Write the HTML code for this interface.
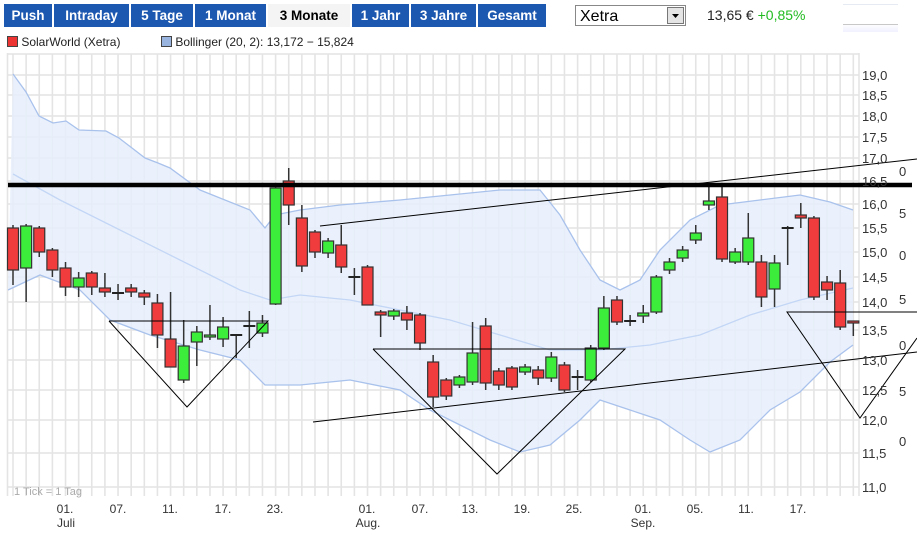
<!DOCTYPE html>
<html><head><meta charset="utf-8">
<style>
body{margin:0;width:917px;height:535px;background:#fff;font-family:"Liberation Sans",Arial,sans-serif;position:relative;overflow:hidden}
.tab{position:absolute;top:4px;height:23px;background:#1c57b0;color:#fff;font-weight:bold;font-size:13.5px;line-height:23px;text-align:center}
.tab.sel{background:#f4f4f4;color:#000}
.sel2{position:absolute;left:575px;top:5px;width:111px;height:21px;border:1px solid #888;background:#fff;font-size:16px;line-height:21px;box-sizing:border-box;padding-left:4px}
.sel2 .b{position:absolute;right:1px;top:1px;width:17px;height:17px;background:#e4e4e4;border:1px solid #777;box-sizing:border-box}
.lbl{position:absolute;font-size:12px;color:#222}
svg{position:absolute;left:0;top:0}
</style></head><body>
<div class="tab" style="left:4px;width:48px">Push</div>
<div class="tab" style="left:54px;width:75px">Intraday</div>
<div class="tab" style="left:131px;width:62px">5 Tage</div>
<div class="tab" style="left:195px;width:71px">1 Monat</div>
<div class="tab sel" style="left:268px;width:82px">3 Monate</div>
<div class="tab" style="left:352px;width:57px">1 Jahr</div>
<div class="tab" style="left:411px;width:65px">3 Jahre</div>
<div class="tab" style="left:478px;width:68px">Gesamt</div>
<div class="sel2">Xetra<div class="b"><svg width="15" height="15"><path d="M4 6h7l-3.5 4z" fill="#000"/></svg></div></div>
<div style="position:absolute;left:707px;top:7px;font-size:14px;color:#222">13,65 € <span style="color:#22bb22">+0,85%</span></div>
<div style="position:absolute;left:843px;top:4px;width:55px;height:27px;border-top:1px solid #e0e6f0;background:linear-gradient(#fff 70%,#eef);opacity:.8"><div style="position:absolute;top:19px;left:0;width:55px;border-top:1px solid #bbb"></div></div>
<div class="lbl" style="left:7px;top:35px"><span style="display:inline-block;width:9px;height:9px;background:#e33;border:1px solid #444;vertical-align:-1px"></span> SolarWorld (Xetra)</div>
<div class="lbl" style="left:161px;top:35px"><span style="display:inline-block;width:9px;height:9px;background:#9ab4e0;border:1px solid #444;vertical-align:-1px"></span> Bollinger (20, 2): 13,172 − 15,824</div>
<svg id="c" width="917" height="535"></svg>
<script>
var s='';
var ys=[75,95,116,137,158,181,204,228,252,277,302,330,360,390,420,453,487];
s+='<rect x="7" y="53" width="852" height="443" fill="#fff"/>';
for(var x=13-13.13;x<860;x+=13.13){if(x<7)continue;s+='<line x1="'+x+'" y1="54" x2="'+x+'" y2="496" stroke="#e4e4e4" stroke-width="1.6"/>';}
s+='<line x1="7" y1="54" x2="859" y2="54" stroke="#e4e4e4" stroke-width="1.6"/>';
ys.forEach(function(y){s+='<line x1="7" y1="'+y+'" x2="859" y2="'+y+'" stroke="#e4e4e4" stroke-width="1.6"/>';});
s+='<line x1="7.5" y1="53" x2="7.5" y2="496" stroke="#e4e4e4" stroke-width="1.6"/><line x1="859" y1="53" x2="859" y2="496" stroke="#e4e4e4" stroke-width="1.6"/>';
var up=[[13,74],[26,92],[39,116],[53,123],[66,121],[79,130],[106,131],[119,138],[132,148],[145,158],[158,163],[170,168],[200,190],[250,210],[265,228],[275,215],[300,210],[340,205],[400,200],[450,195],[500,190],[540,190],[560,215],[580,250],[600,280],[620,290],[640,280],[660,250],[690,220],[720,205],[760,200],[800,195],[830,202],[853,210]];
var lo=[[8,290],[40,275],[80,290],[110,320],[150,335],[200,350],[240,360],[265,385],[300,385],[350,380],[400,390],[430,410],[460,425],[490,440],[520,452],[550,445],[580,420],[600,400],[630,410],[660,420],[690,440],[710,452],[740,440],[770,410],[800,392],[830,362],[853,345]];
var mid=[[13,174],[60,200],[120,230],[180,260],[240,290],[270,300],[300,295],[350,300],[400,310],[450,320],[500,335],[550,350],[600,350],[650,345],[700,335],[750,315],[800,300],[853,288]];
function pts(a){return a.map(function(p){return p.join(',')}).join(' ');}
s+='<polygon points="'+pts(up)+' '+pts(lo.slice().reverse())+'" fill="#e6effc" fill-opacity="0.85"/>';
s+='<polyline points="'+pts(up)+'" fill="none" stroke="#a9c2ec" stroke-width="1.3"/>';
s+='<polyline points="'+pts(lo)+'" fill="none" stroke="#a9c2ec" stroke-width="1.3"/>';
s+='<polyline points="'+pts(mid)+'" fill="none" stroke="#c3d6f5" stroke-width="1.3"/>';
var c=[[228,270,225,285,'r'],[226,268,224,302,'g'],[228,252,226,257,'r'],[250,270,248,277,'r'],[268,287,262,296,'r'],[278,287,272,297,'g'],[273,287,271,295,'r'],[288,292,273,297,'r'],[293,293,284,300,'d'],[288,292,284,297,'r'],[293,297,290,305,'r'],[303,335,294,348,'r'],[339,367,292,367,'r'],[346,380,320,383,'g'],[332,342,326,366,'g'],[335,337,305,340,'g'],[327,339,317,347,'g'],[335,335,335,358,'d'],[326,326,311,348,'d'],[323,333,315,337,'g'],[188,304,186,305,'g'],[181,205,168,225,'r'],[218,266,205,272,'r'],[232,252,230,258,'r'],[241,253,238,258,'g'],[245,267,225,273,'r'],[277,277,268,295,'d'],[267,305,265,305,'r'],[312,315,310,337,'r'],[311,316,309,320,'g'],[313,320,306,330,'r'],[315,343,313,350,'r'],[362,397,355,407,'r'],[380,396,378,400,'r'],[377,385,375,388,'g'],[353,382,322,385,'g'],[326,383,318,390,'r'],[371,385,368,390,'r'],[368,387,366,390,'r'],[367,372,364,375,'g'],[370,378,366,385,'r'],[357,378,352,382,'g'],[365,390,362,392,'r'],[377,377,370,390,'d'],[348,380,345,382,'g'],[308,348,296,350,'g'],[300,322,296,325,'r'],[321,321,315,326,'d'],[313,316,305,323,'g'],[277,312,275,314,'g'],[262,270,258,274,'g'],[250,258,246,262,'g'],[233,240,225,244,'g'],[201,205,183,210,'g'],[197,259,187,262,'r'],[252,262,248,264,'g'],[238,262,213,265,'g'],[262,297,255,307,'r'],[263,289,255,307,'g'],[228,228,226,265,'d'],[215,218,203,228,'r'],[218,297,216,300,'r'],[282,290,276,300,'r'],[283,327,270,330,'r'],[321,323,321,336,'r']];
c.forEach(function(k,i){var x=13+i*13.13;
s+='<line x1="'+x+'" y1="'+k[2]+'" x2="'+x+'" y2="'+k[3]+'" stroke="#333" stroke-width="1.5"/>';
if(k[4]=='d'){s+='<line x1="'+(x-6)+'" y1="'+k[0]+'" x2="'+(x+6)+'" y2="'+k[0]+'" stroke="#222" stroke-width="2"/>';}
else{var h=Math.max(k[1]-k[0],2);s+='<rect x="'+(x-5.5)+'" y="'+k[0]+'" width="11" height="'+h+'" fill="'+(k[4]=='r'?'#f03c3c':'#3ced3c')+'" stroke="#333" stroke-width="1.2"/>';}
});
s+='<g stroke="#000" stroke-width="1" fill="none">';
s+='<polyline points="109,321 268,321 187,407 109,321"/>';
s+='<polyline points="373,349 625,349 497,474 373,349"/>';
s+='<polyline points="917,312 787,312 860,418 917,338"/>';
s+='<line x1="313" y1="422" x2="917" y2="352"/>';
s+='<line x1="320" y1="226" x2="917" y2="159"/>';
s+='</g>';
s+='<line x1="8" y1="185" x2="912" y2="185" stroke="#000" stroke-width="4.5"/>';
ys.forEach(function(y,i){var v=19-i*0.5;
s+='<text x="862" y="'+(y+5)+'" font-size="13" fill="#333" font-family="Liberation Sans,sans-serif">'+v.toFixed(1).replace('.',',')+'</text>';});
[[171,'0'],[213,'5'],[255,'0'],[299,'5'],[345,'0'],[391,'5'],[441,'0']].forEach(function(a){s+='<text x="899" y="'+(a[0]+5)+'" font-size="13" fill="#333" font-family="Liberation Sans,sans-serif">'+a[1]+'</text>';});
[[65,'01.'],[118,'07.'],[170,'11.'],[223,'17.'],[275,'23.'],[367,'01.'],[420,'07.'],[470,'13.'],[522,'19.'],[574,'25.'],[643,'01.'],[695,'05.'],[746,'11.'],[798,'17.']].forEach(function(a){s+='<text x="'+a[0]+'" y="513" font-size="12" fill="#333" text-anchor="middle" font-family="Liberation Sans,sans-serif">'+a[1]+'</text>';});
[[66,'Juli'],[368,'Aug.'],[643,'Sep.']].forEach(function(a){s+='<text x="'+a[0]+'" y="527" font-size="12" fill="#333" text-anchor="middle" font-family="Liberation Sans,sans-serif">'+a[1]+'</text>';});
s+='<text x="14" y="495" font-size="11" fill="#aaa" font-family="Liberation Sans,sans-serif">1 Tick = 1 Tag</text>';
document.getElementById('c').innerHTML=s;
</script>
</body></html>
